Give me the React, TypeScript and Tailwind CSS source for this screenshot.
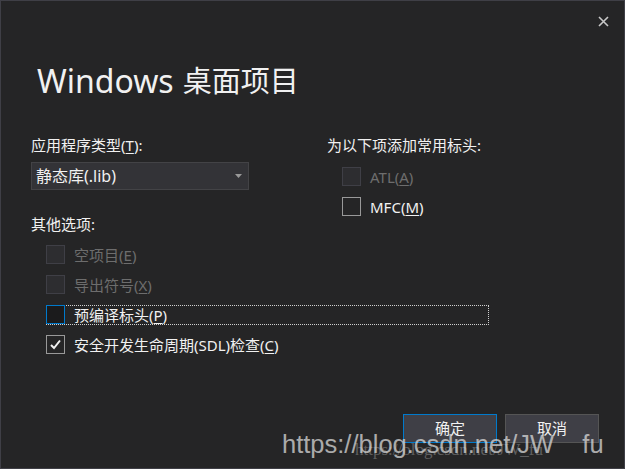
import React from 'react';

const font = { fontFamily: '"Noto Sans", "Noto Sans CJK SC", sans-serif' };

const Key: React.FC<{ k: string }> = ({ k }) => (
  <>
    (<span className="underline underline-offset-2">{k}</span>)
  </>
);

const Box: React.FC<{ state: 'disabled' | 'normal' | 'focus' | 'checked' }> = ({ state }) => {
  const cls =
    state === 'disabled'
      ? 'border-[#3f3f46] bg-[#2d2d30]'
      : state === 'focus'
        ? 'border-[#007acc] bg-[#1b1b1c]'
        : 'border-[#999999] bg-[#252526]';
  return (
    <div className={`w-[19px] h-[19px] border flex items-center justify-center shrink-0 ${cls}`}>
      {state === 'checked' && (
        <svg width="13" height="13" viewBox="0 0 13 13">
          <path d="M2 7 L5 10 L11 2.5" fill="none" stroke="#f1f1f1" strokeWidth="2" />
        </svg>
      )}
    </div>
  );
};

const Check: React.FC<{ state: 'disabled' | 'normal' | 'focus' | 'checked'; children: React.ReactNode }> = ({
  state,
  children,
}) => (
  <div className={`flex items-center gap-[9px] h-[19px] ${state === 'disabled' ? 'text-[#6d6d6d]' : 'text-[#f1f1f1]'}`}>
    <Box state={state} />
    <span className="text-[15px] leading-5">{children}</span>
  </div>
);

export default function App() {
  return (
    <div
      className="relative w-[625px] h-[469px] bg-[#252526] border border-[#3f3f46] overflow-hidden text-[#f1f1f1] flex flex-col"
      style={font}
    >
      {/* close */}
      <div className="flex justify-end pt-[15px] pr-[15px]">
        <svg width="11" height="11" viewBox="0 0 11 11">
          <path d="M1 1 L10 10 M10 1 L1 10" stroke="#c8c8c8" strokeWidth="1.6" />
        </svg>
      </div>

      {/* title */}
      <div className="pl-[36px] mt-[34px] h-[40px] flex items-center text-[#f1f1f1]">
        <span className="text-[32px] leading-[40px]">Windows</span>
        <span className="text-[29px] leading-[40px] ml-[9px]">桌面项目</span>
      </div>

      {/* top options */}
      <div className="flex pl-[30px] mt-[34px] h-[79px]">
        <div className="w-[296px] flex flex-col">
          <div className="text-[15px] leading-5">
            应用程序类型<Key k="T" />:
          </div>
          <div className="mt-[7px] w-[218px] h-[28px] bg-[#333337] border border-[#434346] flex items-center justify-between pl-[4px] pr-[6px]">
            <span className="text-[16px] leading-5">静态库(.lib)</span>
            <svg width="7" height="4" viewBox="0 0 7 4">
              <path d="M0 0 H7 L3.5 4 Z" fill="#999999" />
            </svg>
          </div>
        </div>
        <div className="flex flex-col">
          <div className="text-[15px] leading-5">为以下项添加常用标头:</div>
          <div className="pl-[15px] mt-[12px] flex flex-col gap-[11px]">
            <Check state="disabled">
              ATL<Key k="A" />
            </Check>
            <Check state="normal">
              MFC<Key k="M" />
            </Check>
          </div>
        </div>
      </div>

      {/* other options */}
      <div className="pl-[30px] text-[15px] leading-5">其他选项:</div>
      <div className="pl-[45px] mt-[11px] flex flex-col gap-[11px]">
        <Check state="disabled">
          空项目<Key k="E" />
        </Check>
        <Check state="disabled">
          导出符号<Key k="X" />
        </Check>
        <div className="w-[443px] h-[20px] border border-dotted border-[#d0d0d0] -mb-[1px]">
          <div className="-m-px">
            <Check state="focus">
              预编译标头<Key k="P" />
            </Check>
          </div>
        </div>
        <Check state="checked">
          安全开发生命周期(SDL)检查<Key k="C" />
        </Check>
      </div>

      {/* buttons */}
      <div className="mt-auto mb-[25px] flex justify-end gap-[8px] pr-[25px]">
        <button className="w-[94px] h-[29px] bg-[#3f3f46] border border-[#007acc] text-[15px] text-[#f1f1f1]">
          确定
        </button>
        <button className="w-[94px] h-[29px] bg-[#3f3f46] border border-[#555555] text-[15px] text-[#f1f1f1]">
          取消
        </button>
      </div>

      {/* watermark */}
      <div
        className="absolute left-[354px] top-[439px] text-[17px] leading-5 text-[#9a9a9a] opacity-50 pointer-events-none"
        style={{ fontFamily: '"Liberation Serif", serif' }}
      >
        https://blog.csdn.net/JW_fu
      </div>
      <div
        className="absolute left-[281px] top-[428px] text-[25.5px] leading-[30px] text-[#d8d8d8] opacity-75 pointer-events-none"
        style={{ fontFamily: '"Liberation Sans", sans-serif' }}
      >
        https://blog.csdn.net/JW<span className="ml-[6px] mr-[8px] opacity-0">_</span>fu
      </div>
    </div>
  );
}
